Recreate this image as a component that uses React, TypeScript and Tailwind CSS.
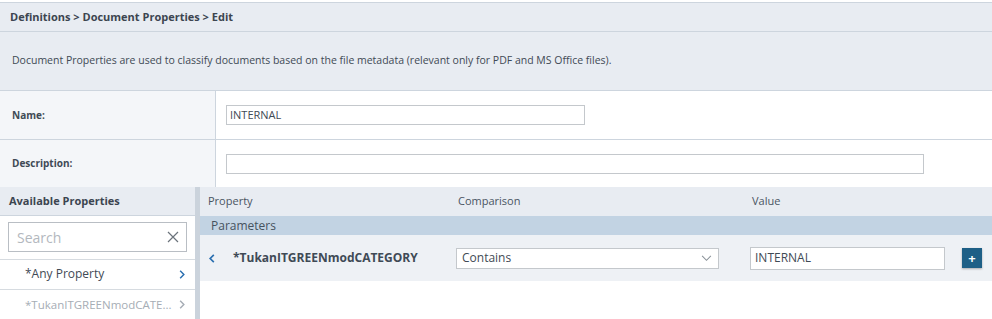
import React from "react";

const font = { fontFamily: '"Open Sans", "Noto Sans", sans-serif' };

function ChevronRight({ className }: { className?: string }) {
  return (
    <svg viewBox="0 0 8 12" className={className} fill="none" stroke="currentColor" strokeWidth="1.6">
      <path d="M2 2l4 4-4 4" />
    </svg>
  );
}

export default function App() {
  return (
    <div className="w-[992px] h-[319px] overflow-hidden bg-white text-[11px] text-[#3b4652]" style={font}>
      {/* Breadcrumb */}
      <div className="mt-[2px] h-[30px] flex items-center px-[10px] bg-[#e8ecf2] border-y border-[#cdd5de] font-bold text-[#3c4550]">
        Definitions &gt; Document Properties &gt; Edit
      </div>

      {/* Info */}
      <div className="h-[59px] flex items-center px-[12px] bg-[#e8ecf2] border-b border-[#cdd5de] text-[10.5px] text-[#3f4a55]">
        Document Properties are used to classify documents based on the file metadata (relevant only for PDF and MS Office files).
      </div>

      {/* Name */}
      <div className="h-[49px] flex border-b border-[#cdd5de]">
        <div className="w-[216px] shrink-0 flex items-center px-[12px] bg-[#f4f6f9] border-r border-[#cdd5de] font-bold text-[#3f4a55] text-[10px]">
          Name:
        </div>
        <div className="flex-1 flex items-center pl-[10px]">
          <div className="w-[359px] h-[20px] border border-[#c4c8cc] flex items-center px-[3px] text-[11px] text-[#3f4a55]">INTERNAL</div>
        </div>
      </div>

      {/* Description */}
      <div className="h-[47px] flex">
        <div className="w-[216px] shrink-0 flex items-center px-[12px] bg-[#f4f6f9] border-r border-[#cdd5de] font-bold text-[#3f4a55] text-[10px]">
          Description:
        </div>
        <div className="flex-1 flex items-center pl-[10px]">
          <div className="w-[698px] h-[20px] border border-[#c4c8cc]" />
        </div>
      </div>

      {/* Bottom */}
      <div className="flex h-[132px]">
        {/* Available properties */}
        <div className="w-[195px] shrink-0 flex flex-col">
          <div className="h-[30px] flex items-center px-[9px] bg-[#e8ecf2] border-b border-[#cdd5de] font-bold text-[#3c4550]">
            Available Properties
          </div>
          <div className="h-[45px] flex items-center px-[8px] border-b border-[#d6dbe0]">
            <div className="w-[183px] h-[30px] border border-[#b9bec4] flex items-center justify-between pl-[8px] pr-[7px]">
              <span className="text-[14px] text-[#b3b8be]">Search</span>
              <svg viewBox="0 0 12 12" className="w-[12px] h-[12px] text-[#6b737b]" stroke="currentColor" strokeWidth="1.2">
                <path d="M1 1l10 10M11 1L1 11" />
              </svg>
            </div>
          </div>
          <div className="h-[31px] flex items-center justify-between pl-[25px] pr-[9px] border-b border-[#d6dbe0] text-[12px] text-[#3f4a55]">
            <span>*Any Property</span>
            <ChevronRight className="w-[8px] h-[11px] text-[#2a6fb0]" />
          </div>
          <div className="h-[30px] flex items-center justify-between pl-[25px] pr-[9px] text-[11.5px] text-[#a6adb5]">
            <span>*TukanITGREENmodCATE...</span>
            <ChevronRight className="w-[8px] h-[11px] text-[#a6adb5]" />
          </div>
        </div>

        {/* Splitter */}
        <div className="w-[5px] shrink-0 bg-[#cbd3dc]" />

        {/* Parameters table */}
        <div className="flex-1 flex flex-col">
          <div className="h-[29px] flex items-center bg-[#e8ecf2] text-[#4a5562]">
            <div className="w-[250px] pl-[8px]">Property</div>
            <div className="w-[293px] pl-[8px]">Comparison</div>
            <div className="pl-[9px]">Value</div>
          </div>
          <div className="h-[19px] flex items-center px-[11px] bg-[#c2d3e3] text-[12px] text-[#46525e]">Parameters</div>
          <div className="h-[46px] flex items-center bg-[#eef1f5]">
            <div className="w-[250px] flex items-center pl-[8px]">
              <svg viewBox="0 0 8 12" className="w-[8px] h-[11px] text-[#2a6fb0]" fill="none" stroke="currentColor" strokeWidth="1.8">
                <path d="M6 2L2 6l4 4" />
              </svg>
              <span className="ml-[17px] font-bold text-[12px] text-[#3f4a55]">*TukanITGREENmodCATEGORY</span>
            </div>
            <div className="w-[293px] pl-[6px]">
              <div className="w-[263px] h-[21px] bg-white border border-[#c4c8cc] flex items-center justify-between pl-[5px] pr-[6px] text-[12px] text-[#3f4a55]">
                <span>Contains</span>
                <svg viewBox="0 0 12 8" className="w-[11px] h-[7px] text-[#8a9299]" fill="none" stroke="currentColor" strokeWidth="1.2">
                  <path d="M1 1l5 5 5-5" />
                </svg>
              </div>
            </div>
            <div className="pl-[7px] flex items-center">
              <div className="w-[195px] h-[23px] bg-white border border-[#c4c8cc] flex items-center pl-[4px] text-[12px] text-[#3f4a55]">INTERNAL</div>
              <div className="ml-[17px] w-[20px] h-[20px] bg-[#1d5f86] text-white flex items-center justify-center text-[13px] font-bold leading-none shadow-[0_1px_2px_rgba(0,0,0,0.3)]">+</div>
            </div>
          </div>
        </div>
      </div>
    </div>
  );
}
